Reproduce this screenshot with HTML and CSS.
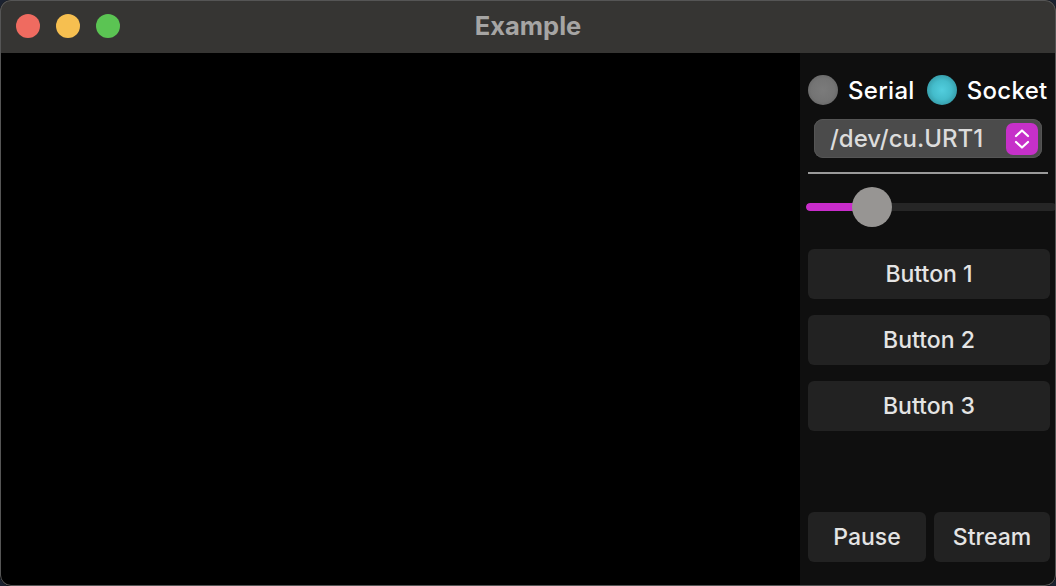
FILE: index.html
```html
<!DOCTYPE html>
<html>
<head>
<meta charset="utf-8">
<link rel="stylesheet" href="styles.css">
</head>
<body>
<div class="window">
  <div class="titlebar">
    <div class="lights">
      <span class="light red"></span>
      <span class="light yellow"></span>
      <span class="light green"></span>
    </div>
    <div class="title">Example</div>
  </div>
  <div class="content">
    <div class="canvas"></div>
    <div class="panel">
      <div class="radios">
        <span class="radio off"></span><span class="radio-label first">Serial</span>
        <span class="radio on"></span><span class="radio-label">Socket</span>
      </div>
      <div class="select">
        <span class="select-text">/dev/cu.URT1</span>
        <span class="select-btn">
          <svg width="20" height="24" viewBox="0 0 20 24"><path d="M4 9 L10 3.5 L16 9 M4 15 L10 20.5 L16 15" fill="none" stroke="#fff" stroke-width="2.2" stroke-linecap="round" stroke-linejoin="round"/></svg>
        </span>
      </div>
      <div class="sep"></div>
      <div class="slider">
        <div class="track"><div class="fill"></div></div>
        <div class="thumb"></div>
      </div>
      <div class="buttons">
        <div class="btn">Button 1</div>
        <div class="btn">Button 2</div>
        <div class="btn">Button 3</div>
      </div>
      <div class="bottom">
        <div class="btn pause">Pause</div>
        <div class="btn stream">Stream</div>
      </div>
    </div>
  </div>
  <div class="frame"></div>
</div>
</body>
</html>
```
FILE: styles.css
```css
html, body {
  margin: 0;
  padding: 0;
  background: #1b2230;
  width: 1056px;
  height: 586px;
  overflow: hidden;
}
.window {
  width: 1056px;
  height: 586px;
  box-sizing: border-box;
  border-radius: 11px;
  overflow: hidden;
  display: flex;
  flex-direction: column;
  background: #000;
  position: relative;
  font-family: Inter, "Noto Sans", sans-serif;
}
.frame {
  position: absolute;
  inset: 0;
  border-radius: 11px;
  box-shadow: inset 0 0 0 1px #555;
  pointer-events: none;
}
.titlebar {
  height: 53px;
  flex: none;
  background: #363533;
  display: flex;
  align-items: center;
  position: relative;
}
.lights {
  display: flex;
  gap: 16px;
  padding-left: 16px;
  margin-top: -1px;
}
.light {
  width: 24px;
  height: 24px;
  border-radius: 50%;
}
.red { background: #ef6b60; }
.yellow { background: #f6bf50; }
.green { background: #5bc453; }
.title {
  position: absolute;
  left: 0;
  right: 0;
  top: 0;
  bottom: 0;
  display: flex;
  align-items: center;
  justify-content: center;
  color: #a6a5a4;
  font-weight: 700;
  font-size: 25.5px;
  margin-top: -2px;
}
.content {
  flex: 1;
  display: flex;
  min-height: 0;
}
.canvas {
  width: 800px;
  flex: none;
  background: #000;
}
.panel {
  flex: 1;
  min-width: 0;
  overflow: hidden;
  background: #0f0f0f;
  display: flex;
  flex-direction: column;
  padding: 22px 6px 24px 8px;
}
.radios {
  display: flex;
  align-items: center;
  height: 30px;
  color: #fff;
  font-size: 24px;
  font-weight: 500;
  white-space: nowrap;
}
.radio {
  width: 30px;
  height: 30px;
  border-radius: 50%;
  flex: none;
}
.radio.off {
  background: radial-gradient(circle at 50% 50%, #7b7b7b 0%, #747474 55%, #5a5a5a 100%);
}
.radio.on {
  background: radial-gradient(circle at 50% 50%, #52cede 0%, #44bccb 45%, #2a7f8a 100%);
}
.radio-label {
  margin-left: 10px;
  letter-spacing: 0.3px;
}
.radio-label.first {
  margin-right: 12px;
}
.select {
  margin: 14px 8px 0 6px;
  height: 39px;
  border-radius: 9px;
  background: #4b4b4b;
  box-shadow: inset 0 0 0 1px #555;
  display: flex;
  align-items: center;
  justify-content: space-between;
  padding: 0 4px 0 16px;
}
.select-text {
  color: #dcdcdc;
  font-size: 24px;
  font-weight: 500;
}
.select-btn {
  width: 32px;
  height: 32px;
  border-radius: 7px;
  background: #c630c9;
  display: flex;
  align-items: center;
  justify-content: center;
}
.sep {
  margin: 14px 2px 0 0;
  height: 2px;
  background: #9a9a9a;
}
.slider {
  margin: 13px -6px 0 -2px;
  height: 40px;
  position: relative;
  display: flex;
  align-items: center;
}
.track {
  flex: 1;
  height: 8px;
  border-radius: 4px;
  background: #262626;
  overflow: hidden;
}
.fill {
  width: 60px;
  height: 100%;
  background: #c92ccb;
  border-radius: 4px;
}
.thumb {
  position: absolute;
  left: 46px;
  top: 0;
  width: 40px;
  height: 40px;
  border-radius: 50%;
  background: #979593;
}
.buttons {
  margin-top: 22px;
  display: flex;
  flex-direction: column;
  gap: 16px;
}
.btn {
  height: 50px;
  border-radius: 6px;
  background: #222;
  color: #e4e4e4;
  font-size: 23px;
  font-weight: 500;
  display: flex;
  align-items: center;
  justify-content: center;
}
.bottom {
  margin-top: auto;
  display: flex;
  gap: 8px;
}
.pause {
  width: 118px;
}
.stream {
  flex: 1;
}
```
